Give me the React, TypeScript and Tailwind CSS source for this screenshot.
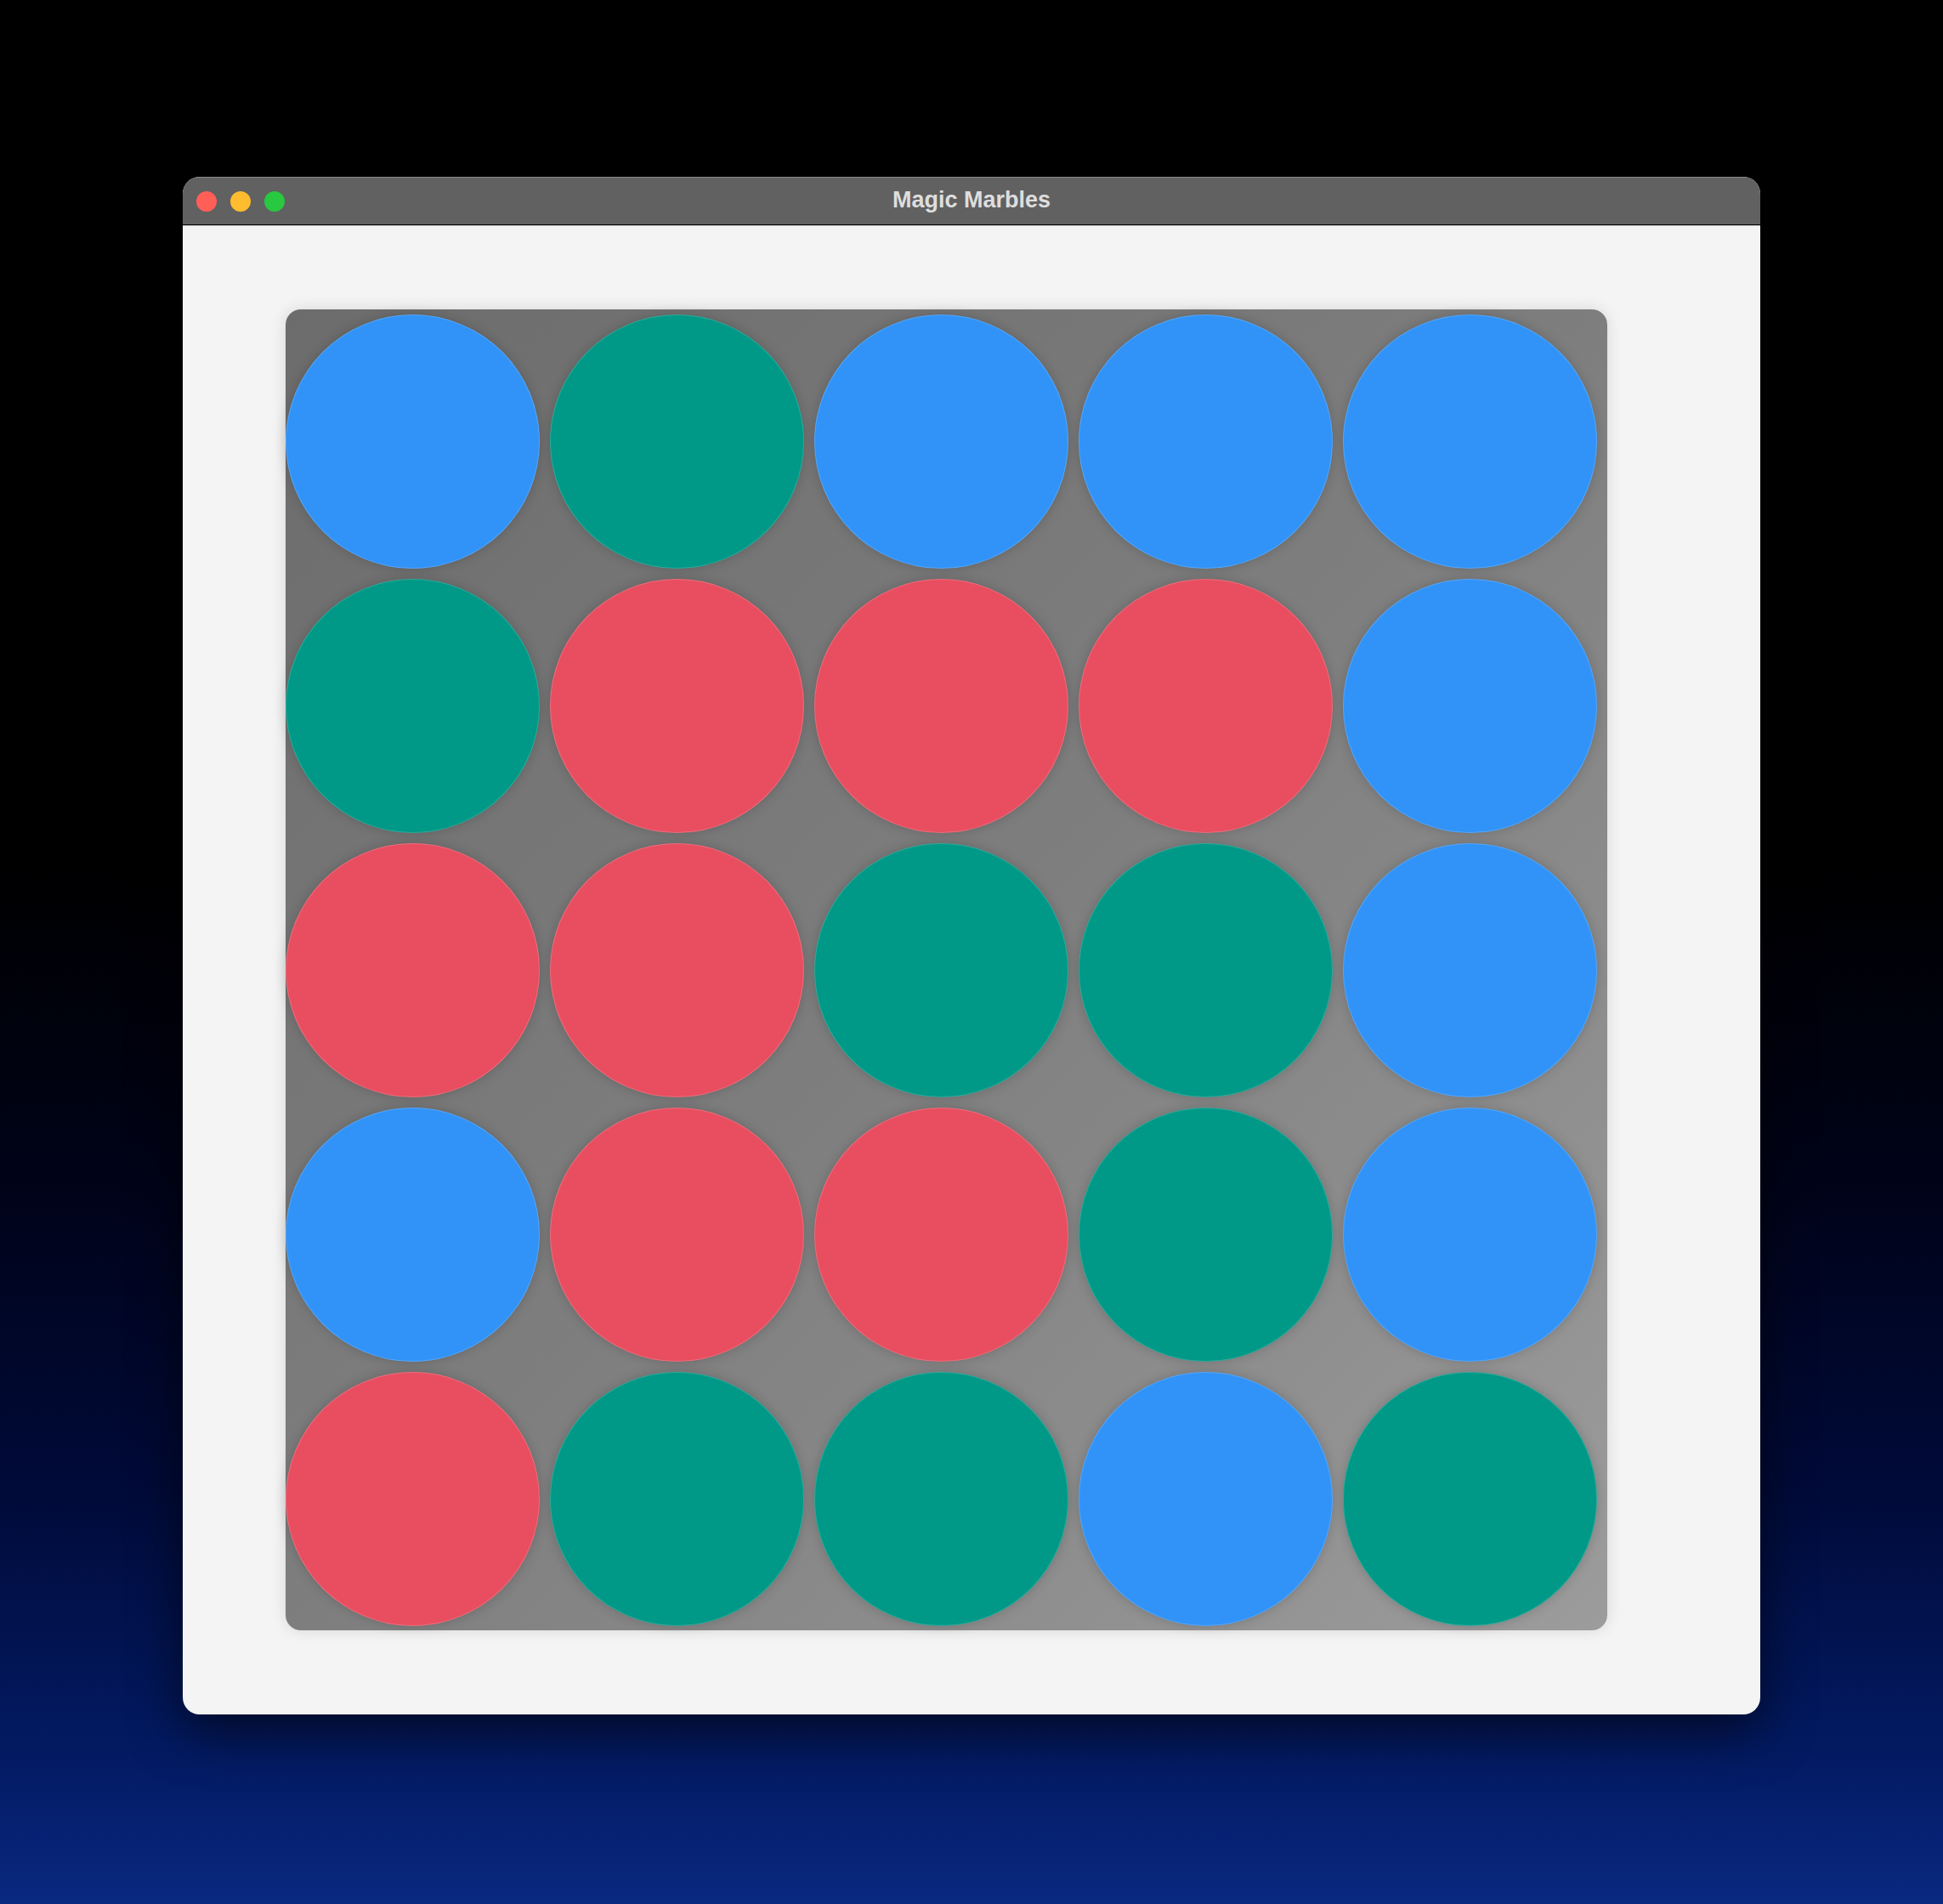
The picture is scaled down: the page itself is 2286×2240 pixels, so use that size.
// Magic Marbles — 5x5 marble board in a mac-style window

const BLUE = "bg-[#3193f7]";
const GREEN = "bg-[#009886]";
const RED = "bg-[#e84e60]";

const board: string[][] = [
  [BLUE, GREEN, BLUE, BLUE, BLUE],
  [GREEN, RED, RED, RED, BLUE],
  [RED, RED, GREEN, GREEN, BLUE],
  [BLUE, RED, RED, GREEN, BLUE],
  [RED, GREEN, GREEN, BLUE, GREEN],
];

function Marble({ color }: { color: string }) {
  return (
    <div
      className={`h-[299px] w-[299px] rounded-full ${color} shadow-[0_0_14px_rgba(0,0,0,0.18),inset_0_0_0_1px_rgba(255,255,255,0.18)]`}
    />
  );
}

export default function App() {
  return (
    <div className="h-[2240px] w-full overflow-hidden bg-[linear-gradient(180deg,#000000_0%,#000000_45%,#000318_62%,#000a38_78%,#031a62_92%,#092880_100%)] pl-[215px] pt-[208px] font-['Liberation_Sans',Arial,sans-serif]">
      <div className="flex h-[1809px] w-[1856px] flex-col overflow-hidden rounded-[20px] bg-[#f4f4f4] shadow-[0_20px_60px_rgba(0,0,0,0.6)]">
        {/* title bar */}
        <div className="relative flex h-[57px] shrink-0 items-center border-t border-t-[#8c8c8c] border-b border-b-[#000000] bg-[#616161] px-[16px]">
          <div className="flex items-center gap-[16px]">
            <span className="h-[24px] w-[24px] rounded-full bg-[#ff5f57]" />
            <span className="h-[24px] w-[24px] rounded-full bg-[#febc2e]" />
            <span className="h-[24px] w-[24px] rounded-full bg-[#28c840]" />
          </div>
          <div className="absolute inset-0 flex items-center justify-center pb-[2px]">
            <span className="text-[27px] font-bold leading-none text-[#dedede]">Magic Marbles</span>
          </div>
        </div>
        <div className="h-px shrink-0 bg-[#c8c8c8]" />

        {/* content */}
        <div className="flex flex-1 pl-[121px] pt-[98px]">
          <div className="h-[1554px] w-[1555px] rounded-[18px] bg-[linear-gradient(135deg,#6c6c6c_0%,#7e7e7e_50%,#9c9c9c_100%)] pr-[12px] pt-[6px] shadow-[0_0_18px_rgba(0,0,0,0.12)]">
            <div className="grid grid-cols-[repeat(5,299px)] gap-[12px]">
              {board.map((row, r) =>
                row.map((color, c) => <Marble key={`${r}-${c}`} color={color} />)
              )}
            </div>
          </div>
        </div>
      </div>
    </div>
  );
}
